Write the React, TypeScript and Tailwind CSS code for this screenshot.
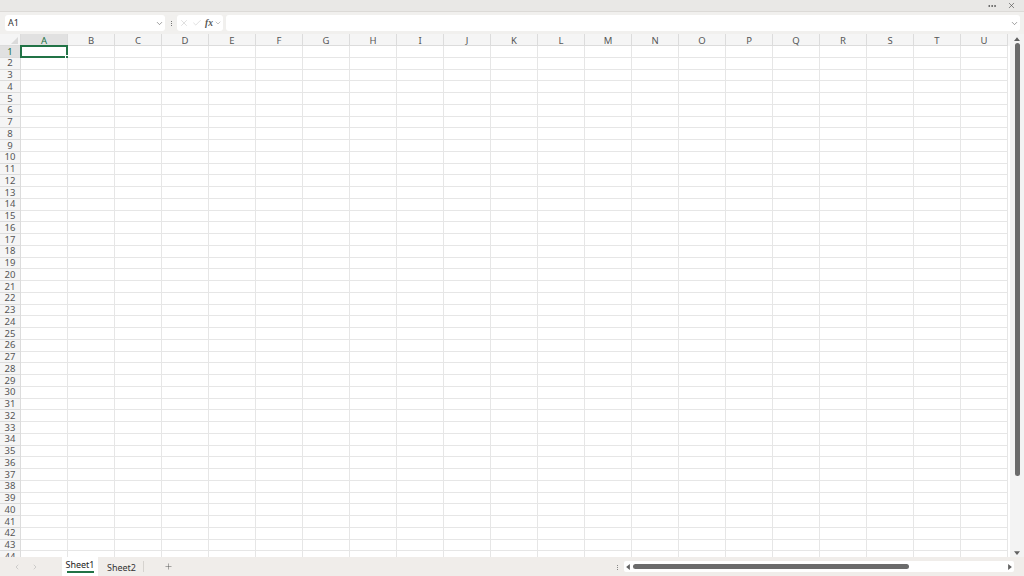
import React from "react";
import { ChevronDown, X, Check, MoreHorizontal, Plus, ChevronLeft, ChevronRight } from "lucide-react";

const COLS = "ABCDEFGHIJKLMNOPQRSTU".split("");
const ROWS = Array.from({ length: 44 }, (_, i) => i + 1);

const Triangle = ({ dir }: { dir: "up" | "down" | "left" | "right" }) => {
  const pts = {
    up: "0,5 4,0 8,5",
    down: "0,0 8,0 4,5",
    left: "5,0 5,8 0,4",
    right: "0,0 0,8 5,4",
  }[dir];
  const vb = dir === "up" || dir === "down" ? "0 0 8 5" : "0 0 5 8";
  const cls = dir === "up" || dir === "down" ? "w-[6px] h-[4px]" : "w-[4px] h-[6px]";
  return (
    <svg viewBox={vb} className={cls}>
      <polygon points={pts} fill="#616161" />
    </svg>
  );
};

const FormulaBar: React.FC = () => (
  <div className="h-[22px] bg-[#f1f0ee] flex items-center pl-[5px] pr-[4px] gap-[3px]">
    <div className="w-[160px] h-[16px] bg-white rounded-[3px] flex items-center justify-between pl-[3px] pr-[1px]">
      <span className="text-[9px] text-[#333]">A1</span>
      <ChevronDown size={9} strokeWidth={1.5} className="text-[#555]" />
    </div>
    <div className="w-[6px] flex flex-col items-center gap-[1px]">
      <span className="w-[1px] h-[1px] bg-[#777]" />
      <span className="w-[1px] h-[1px] bg-[#777]" />
      <span className="w-[1px] h-[1px] bg-[#777]" />
    </div>
    <div className="w-[46px] h-[16px] bg-white rounded-[3px] flex items-center pl-[2px] gap-[3px]">
      <X size={10} strokeWidth={1.1} className="text-[#bbb]" />
      <Check size={10} strokeWidth={1.1} className="text-[#bbb]" />
      <span className="text-[9.5px] italic font-bold text-[#555]" style={{ fontFamily: "'Liberation Serif', serif" }}>
        fx
      </span>
      <ChevronDown size={8} strokeWidth={1.5} className="text-[#888] -ml-[2px]" />
    </div>
    <div className="flex-1 h-[16px] bg-white rounded-[3px] flex items-center justify-end pr-[1px]">
      <ChevronDown size={9} strokeWidth={1.5} className="text-[#555]" />
    </div>
  </div>
);

const Grid: React.FC = () => (
  <div className="flex-1 overflow-hidden bg-white">
    <div className="flex h-[12px] bg-[#f5f5f5]">
      <div className="w-[21px] h-full border-r border-b border-[#dcdcdc] relative">
        <svg viewBox="0 0 8 8" className="absolute right-[2px] bottom-[1px] w-[7px] h-[7px]">
          <polygon points="8,0 8,8 0,8" fill="#dadada" />
        </svg>
      </div>
      {COLS.map((c, i) => (
        <div
          key={c}
          className={
            "w-[47px] shrink-0 h-full flex items-center justify-center text-[9.5px] leading-none pt-[2px] border-r border-b border-[#dcdcdc] " +
            (i === 0 ? "bg-[#e1e1e1] text-[#217346]" : "text-[#555]")
          }
        >
          {c}
        </div>
      ))}
    </div>
    {ROWS.map((r) => (
      <div key={r} className="flex h-[11.75px]">
        <div
          className={
            "w-[21px] shrink-0 h-full flex items-center justify-center text-[9.5px] leading-none border-r border-b border-[#dcdcdc] " +
            (r === 1 ? "bg-[#e1e1e1] text-[#217346]" : "bg-[#f5f5f5] text-[#555]")
          }
        >
          {r}
        </div>
        {COLS.map((c, i) => (
          <div key={c} className="w-[47px] shrink-0 h-full border-r border-b border-[#e6e6e6] relative">
            {r === 1 && i === 0 && (
              <div className="absolute -left-px -top-px w-[48px] h-[12.75px] border-2 border-[#217346]">
                <span className="absolute -right-[3px] -bottom-[3px] w-[4px] h-[4px] bg-[#217346] border border-white" />
              </div>
            )}
          </div>
        ))}
      </div>
    ))}
  </div>
);

const VScroll: React.FC = () => (
  <div className="w-[14px] bg-[#f3f3f3] flex flex-col items-center pt-[3px] pb-[2px]">
    <Triangle dir="up" />
    <div className="w-[5px] h-[433px] bg-[#6b6b6b] rounded-full mt-[2px]" />
    <div className="flex-1" />
    <Triangle dir="down" />
  </div>
);

const BottomBar: React.FC = () => (
  <div className="h-[19px] bg-[#f0edea] flex items-center">
    <div className="flex items-center gap-[10px] pl-[13px] w-[62px]">
      <ChevronLeft size={8} strokeWidth={1.5} className="text-[#aaa]" />
      <ChevronRight size={8} strokeWidth={1.5} className="text-[#aaa]" />
    </div>
    <div className="h-full w-[36px] bg-white flex flex-col items-center justify-center">
      <span className="text-[9px] text-[#222] leading-none">Sheet1</span>
      <span className="w-[27px] h-[2px] bg-[#217346] mt-[2px]" />
    </div>
    <div className="w-[46px] h-[11px] flex items-center justify-center border-r border-[#d6d3cf]">
      <span className="text-[9px] text-[#333] leading-none pt-[2px] pl-[2px]">Sheet2</span>
    </div>
    <div className="w-[48px] flex justify-center">
      <Plus size={9} strokeWidth={1.3} className="text-[#555]" />
    </div>
    <div className="flex-1" />
    <div className="w-[8px] flex flex-col items-center gap-[1px] mr-[3px] mt-[2px]">
      <span className="w-[1px] h-[1px] bg-[#888]" />
      <span className="w-[1px] h-[1px] bg-[#888]" />
      <span className="w-[1px] h-[1px] bg-[#888]" />
    </div>
    <div className="w-[390px] h-[11px] bg-white rounded-[2px] flex items-center px-[2px] gap-[3px] mr-[10px]">
      <Triangle dir="left" />
      <div className="w-[276px] h-[5px] bg-[#6b6b6b] rounded-full" />
      <div className="flex-1" />
      <Triangle dir="right" />
    </div>
  </div>
);

export default function App() {
  return (
    <div
      className="w-[1024px] h-[576px] flex flex-col overflow-hidden bg-white"
      style={{ fontFamily: "'Noto Sans', 'Open Sans', sans-serif" }}
    >
      <div className="h-[12px] bg-[#e9e8e6] border-b border-[#dcdad7] flex items-center justify-end gap-[10px] pr-[8px]">
        <MoreHorizontal size={10} strokeWidth={2} className="text-[#444]" />
        <X size={9} strokeWidth={1.6} className="text-[#444]" />
      </div>
      <FormulaBar />
      <div className="flex-1 flex overflow-hidden">
        <Grid />
        <VScroll />
      </div>
      <BottomBar />
    </div>
  );
}
